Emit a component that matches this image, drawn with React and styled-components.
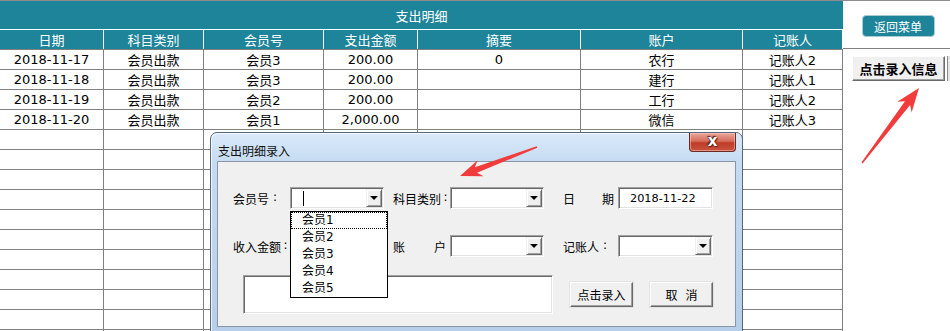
import React from 'react';
import styled, { createGlobalStyle } from 'styled-components';

const GlobalStyle = createGlobalStyle`
  body {
    margin: 0;
    background: #fff;
    overflow: hidden;
    font-family: "DejaVu Sans", "Noto Sans CJK SC", sans-serif;
  }
`;

const TEAL = '#1e8499';
const GRID = '#808080';
const COLS = '104px 100px 120px 94px 163px 162px 100px';

const Page = styled.div`
  position: relative;
  width: 950px;
  height: 331px;
  border-top: 1px solid #8c8c8c;
  display: flex;
  overflow: hidden;
`;

const Sheet = styled.div`
  width: 843px;
  flex: none;
`;

const TitleBar = styled.div`
  height: 28px;
  background: ${TEAL};
  color: #fff;
  font-size: 13px;
  display: flex;
  align-items: center;
  justify-content: center;
`;

const Row = styled.div`
  display: grid;
  grid-template-columns: ${COLS};
`;

const HeadRow = styled(Row)`
  background: ${TEAL};
  border-top: 1px solid #fff;
  height: 20px;
  box-sizing: border-box;
`;

const HeadCell = styled.div`
  color: #fff;
  font-size: 13px;
  border-right: 1px solid #fff;
  display: flex;
  align-items: center;
  justify-content: center;
`;

const Body = styled.div`
  border-top: 1px solid ${GRID};
`;

const Cell = styled.div`
  height: 20px;
  box-sizing: border-box;
  border-right: 1px solid ${GRID};
  border-bottom: 1px solid ${GRID};
  font-size: 13px;
  color: #000;
  display: flex;
  align-items: center;
  justify-content: center;
  white-space: nowrap;
`;

const Side = styled.div`
  flex: 1;
`;

const SideTop = styled.div`
  height: 48px;
  border-bottom: 1px solid ${GRID};
  display: flex;
  justify-content: center;
  padding-top: 14px;
  box-sizing: border-box;
  padding-left: 3px;
`;

const MenuButton = styled.div`
  width: 73px;
  height: 22px;
  box-sizing: border-box;
  background: ${TEAL};
  border: 1px solid #a9cbd4;
  border-radius: 4px;
  color: #fff;
  font-size: 12px;
  display: flex;
  align-items: center;
  justify-content: center;
`;

const SideBody = styled.div`
  display: flex;
  padding: 7px 0 0 9px;
`;

const EntryButton = styled.div`
  width: 93px;
  height: 25px;
  box-sizing: border-box;
  background: #f0f0f0;
  border: 1px solid;
  border-color: #fff #696969 #696969 #fff;
  box-shadow: inset -1px -1px 0 #a0a0a0;
  font-size: 13px;
  font-weight: bold;
  color: #000;
  display: flex;
  align-items: center;
  justify-content: center;
`;

const EntryEdge = styled.div`
  width: 2px;
  height: 25px;
  margin-left: 2px;
  border-left: 1px solid #8a8a8a;
  background: #e6e6e6;
`;

/* dialog window */
const Dialog = styled.div`
  position: absolute;
  left: 210px;
  top: 131px;
  width: 533px;
  height: 215px;
  box-sizing: border-box;
  border: 1px solid #56677c;
  border-radius: 7px 7px 0 0;
  background: linear-gradient(to bottom, #dae9f9 0, #c5dbf2 30px, #b5cde8 100%);
  box-shadow: inset 1px 1px 0 rgba(255, 255, 255, 0.75);
  padding: 0 6px;
`;

const DialogHead = styled.div`
  height: 28px;
  display: flex;
  justify-content: space-between;
`;

const DialogTitle = styled.div`
  font-family: "Noto Sans CJK SC", sans-serif;
  font-size: 12px;
  color: #111;
  padding: 9px 0 0 1px;
`;

const CloseButton = styled.div`
  width: 47px;
  height: 19px;
  box-sizing: border-box;
  border: 1px solid #6b2a22;
  border-top: none;
  border-radius: 0 0 4px 4px;
  background: linear-gradient(to bottom, #e9a79b 0, #d66d5c 45%, #bf3b27 55%, #c9543f 100%);
  box-shadow: inset 0 0 0 1px rgba(255, 210, 200, 0.5);
  display: flex;
  align-items: center;
  justify-content: center;
  color: #fff;
  font-family: "DejaVu Sans", sans-serif;
  font-weight: bold;
  font-size: 15px;
  line-height: 1;
  padding-bottom: 1px;
  text-shadow: 0 0 1px #3a130d, 1px 1px 1px #5a1d14, -1px -1px 1px #5a1d14;
`;

const Panel = styled.div`
  position: relative;
  height: 166px;
  box-sizing: border-box;
  border: 1px solid #8b97a6;
  background: #f0f0f0;
  padding: 25px 0 0 15px;
`;

const FormRow = styled.div`
  display: flex;
  align-items: center;
  height: 22px;
  margin-top: ${p => p.$top || 0}px;
`;

const Label = styled.div`
  width: ${p => p.$w}px;
  margin-left: ${p => p.$ml || 0}px;
  padding-right: ${p => (p.$spread ? 4 : 0)}px;
  box-sizing: border-box;
  font-family: "Noto Sans CJK SC", sans-serif;
  font-size: 12px;
  color: #000;
  display: flex;
  justify-content: ${p => (p.$spread ? 'space-between' : 'flex-start')};
  white-space: nowrap;
`;

const Colon = styled.span`
  width: 12px;
  text-align: center;
  font-family: "DejaVu Sans", sans-serif;
`;

const Sunken = styled.div`
  position: relative;
  width: ${p => p.$w}px;
  height: ${p => p.$h || 22}px;
  box-sizing: border-box;
  background: #fff;
  border: 1px solid;
  border-color: #a0a0a0 #fff #fff #a0a0a0;
  box-shadow: inset 1px 1px 0 #696969, inset -1px -1px 0 #e3e3e3;
  display: flex;
  align-items: center;
  margin-left: ${p => p.$ml || 0}px;
`;

const Caret = styled.div`
  width: 1px;
  height: 15px;
  background: #000;
  margin-left: 12px;
`;

const DateText = styled.div`
  font-size: 11.3px;
  color: #000;
  padding-left: 11px;
`;

const DropButton = styled.div`
  margin-left: auto;
  margin-right: 1px;
  width: 16px;
  height: 18px;
  box-sizing: border-box;
  background: #f0f0f0;
  border: 1px solid;
  border-color: #f0f0f0 #696969 #696969 #f0f0f0;
  box-shadow: inset 1px 1px 0 #fff, inset -1px -1px 0 #a0a0a0;
  display: flex;
  align-items: center;
  justify-content: center;

  &::after {
    content: '';
    border-left: 4px solid transparent;
    border-right: 4px solid transparent;
    border-top: 4px solid #000;
  }
`;

const DropList = styled.div`
  position: absolute;
  left: -1px;
  top: 23px;
  width: 98px;
  height: 87px;
  box-sizing: border-box;
  border: 1px solid #000;
  background: #fff;
  z-index: 2;
`;

const DropItem = styled.div`
  height: 17px;
  box-sizing: border-box;
  padding-left: ${p => (p.$focus ? 10 : 11)}px;
  border: ${p => (p.$focus ? '1px dotted #000' : 'none')};
  font-size: 12px;
  line-height: ${p => (p.$focus ? 15 : 17)}px;
  color: #000;
`;

const ActionRow = styled.div`
  display: flex;
  align-items: center;
  margin-top: 18px;
  padding-left: 10px;
`;

const FormButton = styled.div`
  width: 63px;
  height: 25px;
  margin-left: 17px;
  box-sizing: border-box;
  background: #f0f0f0;
  border: 1px solid;
  border-color: #fff #696969 #696969 #fff;
  box-shadow: inset -1px -1px 0 #a0a0a0, 0 0 0 1px #e3e3e3;
  font-family: "Noto Sans CJK SC", sans-serif;
  font-size: 12px;
  color: #000;
  display: flex;
  align-items: center;
  justify-content: center;
  white-space: pre;
`;

const Marks = styled.svg`
  position: absolute;
  left: 0;
  top: 0;
  pointer-events: none;
  z-index: 5;
`;

const heads = ['日期', '科目类别', '会员号', '支出金额', '摘要', '账户', '记账人'];

const rows = [
  ['2018-11-17', '会员出款', '会员3', '200.00', '0', '农行', '记账人2'],
  ['2018-11-18', '会员出款', '会员3', '200.00', '', '建行', '记账人1'],
  ['2018-11-19', '会员出款', '会员2', '200.00', '', '工行', '记账人2'],
  ['2018-11-20', '会员出款', '会员1', '2,000.00', '', '微信', '记账人3'],
];
while (rows.length < 15) rows.push(['', '', '', '', '', '', '']);

const members = ['会员1', '会员2', '会员3', '会员4', '会员5'];

// tapered screenshot-style arrow from tail to tip
function arrow([sx, sy], [tx, ty], headLen = 24, headW = 9, shaftW = 3.2, tailW = 0.8) {
  const len = Math.hypot(tx - sx, ty - sy);
  const dx = (tx - sx) / len;
  const dy = (ty - sy) / len;
  const nx = -dy;
  const ny = dx;
  const bx = tx - dx * headLen;
  const by = ty - dy * headLen;
  const nbx = tx - dx * (headLen - 5);
  const nby = ty - dy * (headLen - 5);
  const pts = [
    [sx + nx * tailW, sy + ny * tailW],
    [nbx + nx * shaftW, nby + ny * shaftW],
    [bx + nx * headW, by + ny * headW],
    [tx, ty],
    [bx - nx * headW, by - ny * headW],
    [nbx - nx * shaftW, nby - ny * shaftW],
    [sx - nx * tailW, sy - ny * tailW],
  ];
  return pts.map(p => p.map(v => v.toFixed(1)).join(',')).join(' ');
}

const Combo = ({ w, ml, children }) => (
  <Sunken $w={w} $ml={ml}>
    {children}
    <DropButton />
  </Sunken>
);

export default function App() {
  return (
    <Page>
      <GlobalStyle />
      <Sheet>
        <TitleBar>支出明细</TitleBar>
        <HeadRow>
          {heads.map(h => (
            <HeadCell key={h}>{h}</HeadCell>
          ))}
        </HeadRow>
        <Body>
          {rows.map((r, i) => (
            <Row key={i}>
              {r.map((c, j) => (
                <Cell key={j}>{c}</Cell>
              ))}
            </Row>
          ))}
        </Body>
      </Sheet>
      <Side>
        <SideTop>
          <MenuButton>返回菜单</MenuButton>
        </SideTop>
        <SideBody>
          <EntryButton>点击录入信息</EntryButton>
          <EntryEdge />
        </SideBody>
      </Side>

      <Dialog>
        <DialogHead>
          <DialogTitle>支出明细录入</DialogTitle>
          <CloseButton>x</CloseButton>
        </DialogHead>
        <Panel>
          <FormRow>
            <Label $w={57}>
              会员号<Colon>:</Colon>
            </Label>
            <Combo w={94}>
              <Caret />
              <DropList>
                {members.map((m, i) => (
                  <DropItem key={m} $focus={i === 0}>{m}</DropItem>
                ))}
              </DropList>
            </Combo>
            <Label $w={57} $ml={9}>
              科目类别<Colon>:</Colon>
            </Label>
            <Combo w={94} />
            <Label $w={55} $ml={19} $spread>
              <span>日</span>
              <span>期</span>
            </Label>
            <Sunken $w={95}>
              <DateText>2018-11-22</DateText>
            </Sunken>
          </FormRow>
          <FormRow $top={26}>
            <Label $w={57}>
              收入金额<Colon>:</Colon>
            </Label>
            <Sunken $w={94} />
            <Label $w={57} $ml={9} $spread>
              <span>账</span>
              <span>户</span>
            </Label>
            <Combo w={94} />
            <Label $w={55} $ml={19}>
              记账人<Colon>:</Colon>
            </Label>
            <Combo w={95} />
          </FormRow>
          <ActionRow>
            <Sunken $w={310} $h={39} />
            <FormButton>点击录入</FormButton>
            <FormButton>{'取   消'}</FormButton>
          </ActionRow>
        </Panel>
      </Dialog>

      <Marks width="950" height="331">
        <polygon points={arrow([862, 162], [919, 87])} fill="#f23c3c" />
        <polygon points={arrow([537, 146], [460, 175], 22, 8.5, 3, 0.8)} fill="#f23c3c" />
      </Marks>
    </Page>
  );
}
